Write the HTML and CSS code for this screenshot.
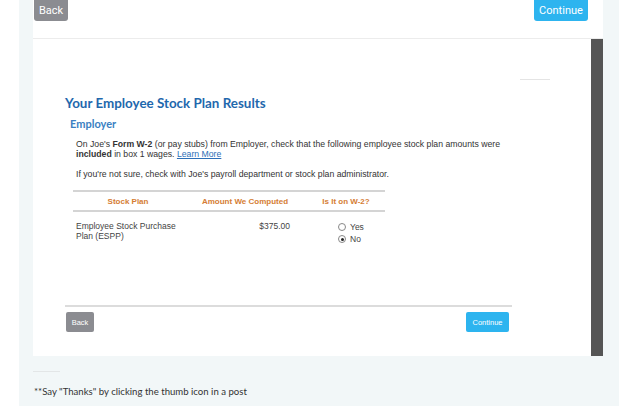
FILE: index.html
```html
<!DOCTYPE html>
<html lang="en">
<head>
    <meta charset="UTF-8">
    <meta name="viewport" content="width=device-width, initial-scale=1.0">
    <title>Employee Stock Plan Results</title>
    <link rel="stylesheet" href="styles.css">
</head>
<body>

    <div class="panel">
        <div class="shot">
            <div class="top-bar">
                <button class="btn btn-back">Back</button>
                <button class="btn btn-continue">Continue</button>
            </div>

            <div class="frame">
                <div class="viewport">
                    <div class="corner-line"></div>

                    <h1 class="title">Your Employee Stock Plan Results</h1>
                    <h2 class="subtitle">Employer</h2>

                    <p class="text">
                        On Joe's <b>Form W-2</b> (or pay stubs) from Employer, check that the following employee stock plan amounts were
                        <b>included</b> in box 1 wages. <a href="#">Learn More</a>
                    </p>
                    <p class="text">If you're not sure, check with Joe's payroll department or stock plan administrator.</p>

                    <table class="plan-table">
                        <thead>
                            <tr>
                                <th class="col-plan">Stock Plan</th>
                                <th class="col-amount">Amount We Computed</th>
                                <th class="col-w2">Is It on W-2?</th>
                            </tr>
                        </thead>
                        <tbody>
                            <tr>
                                <td class="col-plan">Employee Stock Purchase<br>Plan (ESPP)</td>
                                <td class="col-amount amount">$375.00</td>
                                <td class="col-w2">
                                    <label class="radio"><span class="dot"></span>Yes</label>
                                    <label class="radio"><span class="dot checked"></span>No</label>
                                </td>
                            </tr>
                        </tbody>
                    </table>

                    <div class="bottom-bar">
                        <button class="btn-sm btn-back">Back</button>
                        <button class="btn-sm btn-continue">Continue</button>
                    </div>
                </div>
                <div class="scrollbar"></div>
            </div>
        </div>

        <div class="footer">
            <div class="footer-line"></div>
            <p>**Say "Thanks" by clicking the thumb icon in a post</p>
        </div>
    </div>

</body>
</html>
```

FILE: styles.css
```css
body {
    margin: 0;
    background: white;
    font-family: "Liberation Sans", Arial, sans-serif;
}
.panel {
    margin-left: 19px;
    width: 600px;
    height: 406px;
    padding-left: 14px;
    box-sizing: border-box;
    background: #f2f7f8;
}
.shot {
    width: 570px;
    background: white;
}
.top-bar {
    height: 38px;
    display: flex;
    justify-content: space-between;
    align-items: flex-start;
    padding: 0 15px 0 1px;
    border-bottom: 1px solid #ececec;
}
.btn {
    height: 21px;
    border: none;
    border-radius: 0 0 3px 3px;
    color: white;
    font-family: Roboto, "Liberation Sans", sans-serif;
    font-size: 11px;
    padding: 0;
}
.top-bar .btn-back { width: 34px; }
.top-bar .btn-continue { width: 54px; }
.btn-back { background: #8b8c91; }
.btn-continue { background: #2db4ef; }

.frame {
    display: flex;
    height: 317px;
}
.viewport {
    flex: 1;
    padding-left: 32px;
    position: relative;
}
.scrollbar {
    width: 12px;
    background: #555;
}
.corner-line {
    position: absolute;
    left: 487px;
    top: 40px;
    width: 30px;
    height: 1px;
    background: #e4e4e4;
}
.title {
    margin: 56px 0 0;
    font-family: Lato, sans-serif;
    font-size: 13.4px;
    font-weight: 700;
    color: #1f68ad;
}
.subtitle {
    margin: 6px 0 0 5px;
    font-family: Lato, sans-serif;
    font-size: 11px;
    font-weight: 700;
    color: #3b7fc2;
}
.text {
    margin: 9px 0 0 11px;
    width: 450px;
    font-size: 8.7px;
    line-height: 10px;
    color: #333;
}
.text + .text { margin-top: 10px; }
.text a { color: #2d6fb7; }

.plan-table {
    margin: 11px 0 0 8px;
    width: 312px;
    table-layout: fixed;
    border-collapse: collapse;
    font-size: 8.5px;
    color: #444;
}
.plan-table th {
    color: #d57d34;
    font-size: 8px;
    font-weight: 700;
    height: 18px;
    padding: 0;
    border-top: 2px solid #d4d4d4;
    border-bottom: 2px solid #d4d4d4;
}
.plan-table td {
    vertical-align: top;
    padding: 9px 0 0;
    line-height: 10px;
}
.plan-table td.col-plan { padding-left: 3px; text-align: left; }
.col-plan { width: 110px; }
.col-amount { width: 124px; }
.amount { text-align: right; }
.plan-table td.amount { padding-right: 17px; }
.plan-table td.col-w2 { padding-left: 31px; }
.radio {
    display: flex;
    align-items: center;
    gap: 4px;
    height: 12px;
}
.dot {
    width: 6px;
    height: 6px;
    border: 1px solid #888;
    border-radius: 50%;
    background: white;
    position: relative;
}
.dot.checked::after {
    content: "";
    position: absolute;
    left: 1.5px;
    top: 1.5px;
    width: 3px;
    height: 3px;
    border-radius: 50%;
    background: #222;
}
.bottom-bar {
    position: absolute;
    left: 32px;
    top: 266px;
    width: 447px;
    border-top: 2px solid #dcdcdc;
    display: flex;
    justify-content: space-between;
    padding: 5px 3px 0 1px;
    box-sizing: border-box;
}
.btn-sm {
    height: 20px;
    border: none;
    border-radius: 2px;
    color: white;
    font-size: 7.5px;
    padding: 0;
}
.bottom-bar .btn-back { width: 28px; }
.bottom-bar .btn-continue { width: 43px; }

.footer {
    padding-top: 15px;
}
.footer-line {
    width: 27px;
    height: 1px;
    background: #e3e6e7;
}
.footer p {
    margin: 14px 0 0 1px;
    font-family: Lato, sans-serif;
    font-size: 9.6px;
    color: #333;
}
```
